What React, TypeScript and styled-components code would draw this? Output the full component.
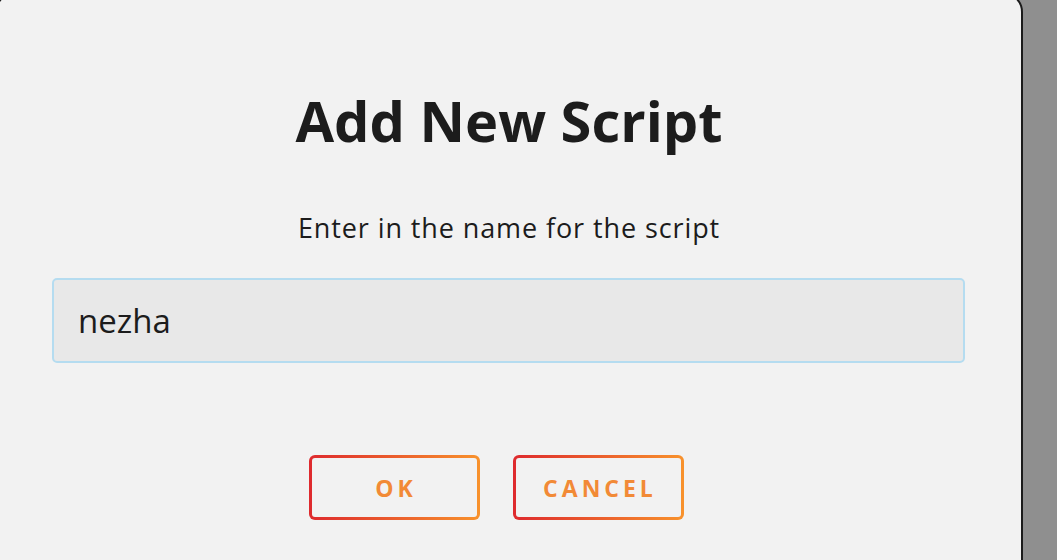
import React from "react";
import styled, { createGlobalStyle } from "styled-components";

const Global = createGlobalStyle`
  html, body { margin: 0; padding: 0; }
  body {
    width: 1057px;
    height: 560px;
    overflow: hidden;
    background: #8f8f8f;
    font-family: "Open Sans", "Noto Sans", sans-serif;
  }
`;

const Overlay = styled.div`
  width: 1057px;
  height: 560px;
  overflow: hidden;
  background: #8f8f8f;
  display: flex;
  align-items: flex-start;
`;

const Dialog = styled.div`
  box-sizing: border-box;
  margin-left: -5px;
  margin-top: -8px;
  width: 1028px;
  height: 600px;
  background: #f2f2f2;
  border: 2px solid #1b1b1b;
  border-radius: 20px;
  display: flex;
  flex-direction: column;
  align-items: center;
  padding-top: 98px;
`;

const Title = styled.h1`
  margin: 0;
  font-size: 56px;
  line-height: 1;
  font-weight: 700;
  color: #1c1c1c;
  letter-spacing: 0;
`;

const Prompt = styled.p`
  margin: 66px 0 0;
  font-size: 27px;
  line-height: 1;
  letter-spacing: 0.9px;
  color: #1c1c1c;
`;

const NameInput = styled.input`
  box-sizing: border-box;
  margin-top: 37px;
  margin-right: 1px;
  width: 913px;
  height: 85px;
  padding: 0 24px;
  background: #e8e8e8;
  border: 2px solid #b5dcf0;
  border-radius: 5px;
  font-family: inherit;
  font-size: 33px;
  color: #1c1c1c;
  outline: none;
`;

const Actions = styled.div`
  margin-top: 92px;
  margin-right: 26px;
  display: flex;
  gap: 33px;
`;

const ActionButton = styled.button`
  box-sizing: border-box;
  width: 171px;
  height: 65px;
  border: 3px solid transparent;
  border-radius: 6px;
  background:
    linear-gradient(#f2f2f2, #f2f2f2) padding-box,
    linear-gradient(90deg, #de2a2e, #f8922c) border-box;
  font-family: inherit;
  font-size: 23px;
  font-weight: 700;
  letter-spacing: 4px;
  padding: 0 0 0 4px;
  color: #f28a36;
  cursor: pointer;
`;

export default function App() {
  return (
    <>
      <Global />
      <Overlay>
        <Dialog>
          <Title>Add New Script</Title>
          <Prompt>Enter in the name for the script</Prompt>
          <NameInput defaultValue="nezha" />
          <Actions>
            <ActionButton>OK</ActionButton>
            <ActionButton>CANCEL</ActionButton>
          </Actions>
        </Dialog>
      </Overlay>
    </>
  );
}
